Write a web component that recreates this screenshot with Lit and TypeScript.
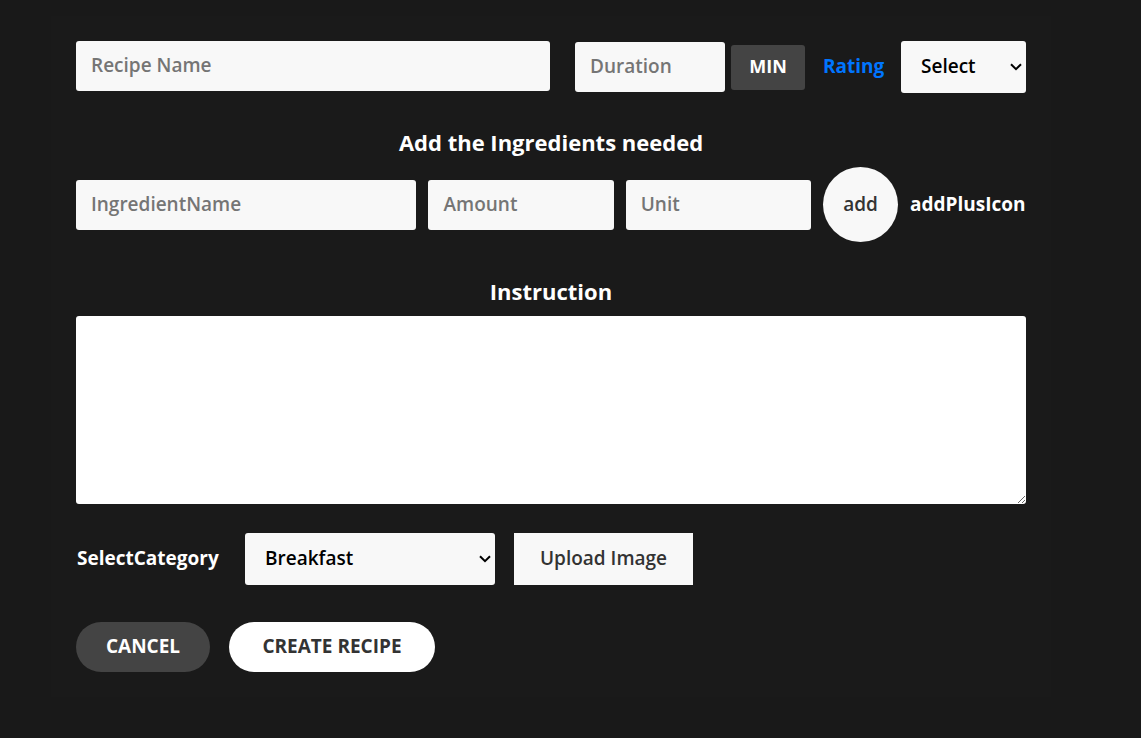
import { LitElement, html, css } from "lit";
import { customElement } from "lit/decorators.js";

@customElement("app-root")
export class AppRoot extends LitElement {
  static styles = css`
    :host {
      display: block;
      box-sizing: border-box;
      min-height: 100vh;
      padding: 16px 90px 40px 51px;
      background: #191919;
      color: #fff;
      font-family: "Open Sans", "Noto Sans", sans-serif;
      font-size: 19px;
      font-weight: 600;
      line-height: 24px;
    }
    * {
      box-sizing: border-box;
    }
    .card {
      padding: 25px;
      background: #1a1a1a;
      margin: 0;
    }
    .row {
      display: flex;
      align-items: center;
    }
    input,
    select,
    button,
    textarea {
      font: inherit;
      margin: 0;
      border: 0;
      border-radius: 3px;
      background-color: #f8f8f8;
    }
    input {
      height: 50px;
      min-width: 0;
      padding: 0 15px 2px;
      color: #333;
    }
    input::placeholder {
      color: #757575;
      opacity: 1;
    }
    select {
      appearance: none;
      height: 52px;
      padding: 0 20px 2px;
      color: #000;
      background-image: url("data:image/svg+xml,%3Csvg xmlns='http://www.w3.org/2000/svg' width='12' height='8' viewBox='0 0 12 8'%3E%3Cpath d='M1 1.2 6 6.2 11 1.2' fill='none' stroke='%23000' stroke-width='2'/%3E%3C/svg%3E");
      background-repeat: no-repeat;
      background-position: right 4px center;
    }
    button {
      padding: 0 0 2px;
    }
    .name {
      flex: 1;
      align-self: flex-start;
      margin-right: 25px;
    }
    .duration {
      width: 150px;
      margin-right: 6px;
    }
    .min {
      width: 74px;
      height: 45px;
      margin-right: 18px;
      background: #444;
      color: #fff;
      font-size: 18px;
      font-weight: 700;
    }
    label,
    .plus {
      padding-bottom: 2px;
      font-weight: 700;
    }
    .rating-label {
      width: 78px;
      color: #0075ff;
    }
    .rating {
      width: 125px;
    }
    .heading {
      margin: 0;
      padding: 0;
      font-size: 22px;
      line-height: 28px;
      font-weight: 700;
      text-align: center;
    }
    .ingredients-heading {
      margin-top: 35px;
      margin-bottom: 11px;
    }
    .instruction-heading {
      display: block;
      margin-top: 35px;
      margin-bottom: 11px;
    }
    .ingredients {
      display: grid;
      grid-template-columns: 340fr 185fr 185fr 75px 116px;
      gap: 12px;
      align-items: center;
    }
    .add {
      height: 75px;
      border-radius: 50%;
      color: #333;
    }
    .plus {
      white-space: nowrap;
    }
    .instruction {
      display: block;
      width: 100%;
      height: 188px;
      padding: 15px;
      background-color: #fff;
      color: #333;
      resize: both;
    }
    .options {
      margin-top: 29px;
    }
    .category-label {
      width: 169px;
      padding-left: 1px;
    }
    .category {
      width: 250px;
      margin-right: 19px;
    }
    .upload {
      width: 179px;
      height: 52px;
      border-radius: 0;
      color: #333;
    }
    .actions {
      gap: 19px;
      margin-top: 37px;
    }
    .action {
      height: 50px;
      border-radius: 25px;
      font-weight: 700;
    }
    .cancel {
      width: 134px;
      background: #444;
      color: #fff;
    }
    .create {
      width: 206px;
      background: #fff;
      color: #333;
    }
  `;

  render() {
    return html`
      <form class="card" @submit=${(e: Event) => e.preventDefault()}>
        <div class="row">
          <input class="name" type="text" placeholder="Recipe Name" aria-label="Recipe Name" />
          <input class="duration" type="text" placeholder="Duration" aria-label="Duration" />
          <button class="min" type="button">MIN</button>
          <label class="rating-label" for="rating">Rating</label>
          <select class="rating" id="rating">
            <option>Select</option>
          </select>
        </div>
        <h2 class="heading ingredients-heading">Add the Ingredients needed</h2>
        <div class="ingredients">
          <input type="text" placeholder="IngredientName" aria-label="IngredientName" />
          <input type="text" placeholder="Amount" aria-label="Amount" />
          <input type="text" placeholder="Unit" aria-label="Unit" />
          <button class="add" type="button">add</button>
          <span class="plus">addPlusIcon</span>
        </div>
        <label class="heading instruction-heading" for="instruction">Instruction</label>
        <textarea class="instruction" id="instruction"></textarea>
        <div class="row options">
          <label class="category-label" for="category">SelectCategory</label>
          <select class="category" id="category">
            <option>Breakfast</option>
          </select>
          <button class="upload" type="button">Upload Image</button>
        </div>
        <div class="row actions">
          <button class="action cancel" type="button">CANCEL</button>
          <button class="action create" type="submit">CREATE RECIPE</button>
        </div>
      </form>
    `;
  }
}
